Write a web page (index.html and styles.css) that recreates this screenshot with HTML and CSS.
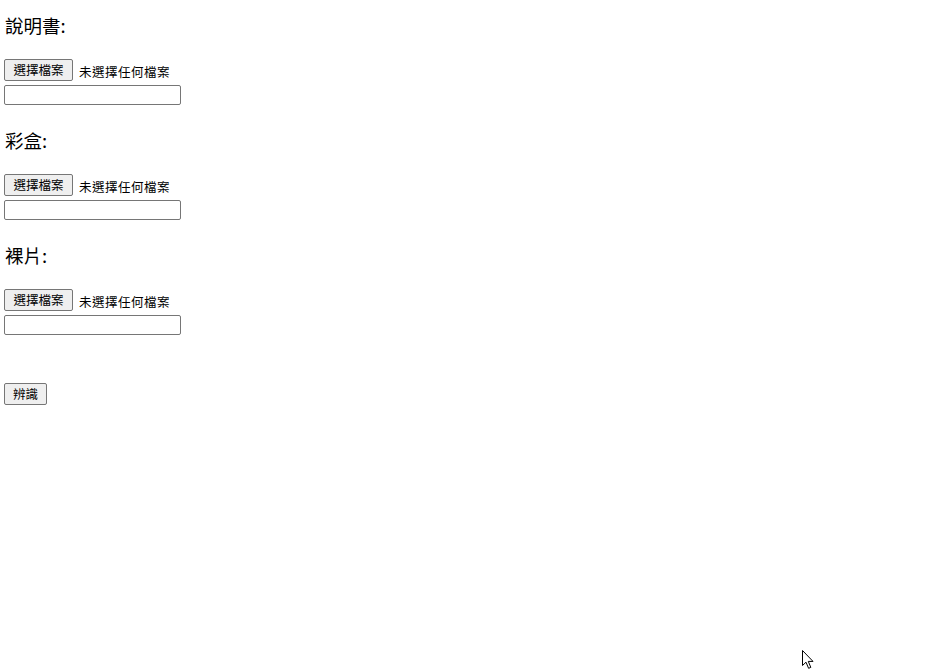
FILE: index.html
```html
<!DOCTYPE html>
<html lang="zh-Hant">
<head>
<meta charset="utf-8">
<title>辨識</title>
<link rel="stylesheet" href="styles.css">
</head>
<body>
<form class="form">
  <section class="group">
    <p class="label">說明書:</p>
    <div class="file-row">
      <button type="button" class="btn">選擇檔案</button>
      <span class="file-status">未選擇任何檔案</span>
    </div>
    <input type="text" class="text-input">
  </section>
  <section class="group">
    <p class="label">彩盒:</p>
    <div class="file-row">
      <button type="button" class="btn">選擇檔案</button>
      <span class="file-status">未選擇任何檔案</span>
    </div>
    <input type="text" class="text-input">
  </section>
  <section class="group">
    <p class="label">裸片:</p>
    <div class="file-row">
      <button type="button" class="btn">選擇檔案</button>
      <span class="file-status">未選擇任何檔案</span>
    </div>
    <input type="text" class="text-input">
  </section>
  <div class="submit-row">
    <button type="button" class="btn btn-submit">辨識</button>
  </div>
</form>
<svg class="cursor" width="14" height="20" viewBox="0 0 14 20" aria-hidden="true">
  <path d="M0.5 0.5 L0.5 15.5 L4 12.2 L6.6 18.3 L8.8 17.4 L6.3 11.4 L11 11.4 Z" fill="#fff" stroke="#000" stroke-width="1" stroke-linejoin="miter"/>
</svg>
</body>
</html>
```

FILE: styles.css
```css
html, body {
  margin: 0;
  padding: 0;
  background: #fff;
}
body {
  font-family: "Noto Sans CJK TC", "Liberation Sans", sans-serif;
  color: #000;
  padding: 13px 4px 0 4px;
}
.form {
  display: flex;
  flex-direction: column;
  align-items: flex-start;
}
.group {
  display: flex;
  flex-direction: column;
  align-items: flex-start;
  height: 115px;
}
.label {
  margin: 0 0 0 1px;
  font-size: 18.5px;
  line-height: 24px;
  height: 24px;
}
.file-row {
  margin-top: 22px;
  display: flex;
  align-items: center;
  gap: 6px;
  height: 22px;
}
.btn {
  box-sizing: border-box;
  height: 22px;
  padding: 0 7px;
  font-family: "Noto Sans CJK TC", sans-serif;
  font-size: 12.5px;
  line-height: 18px;
  color: #000;
  background: #efefef;
  border: 1px solid #767676;
  border-radius: 2px;
}
.file-row .btn {
  width: 69px;
}
.file-status {
  font-size: 12.5px;
  line-height: 16px;
  letter-spacing: 0.5px;
  padding-top: 3px;
}
.text-input {
  box-sizing: border-box;
  margin: 4px 0 0 0;
  width: 177px;
  height: 20px;
  padding: 0 2px;
  border: 1px solid #767676;
  border-radius: 2px;
  background: #fff;
}
.submit-row {
  margin-top: 22px;
}
.btn-submit {
  width: 43px;
  padding: 0;
}
.cursor {
  position: absolute;
  left: 802px;
  top: 650px;
}
```
